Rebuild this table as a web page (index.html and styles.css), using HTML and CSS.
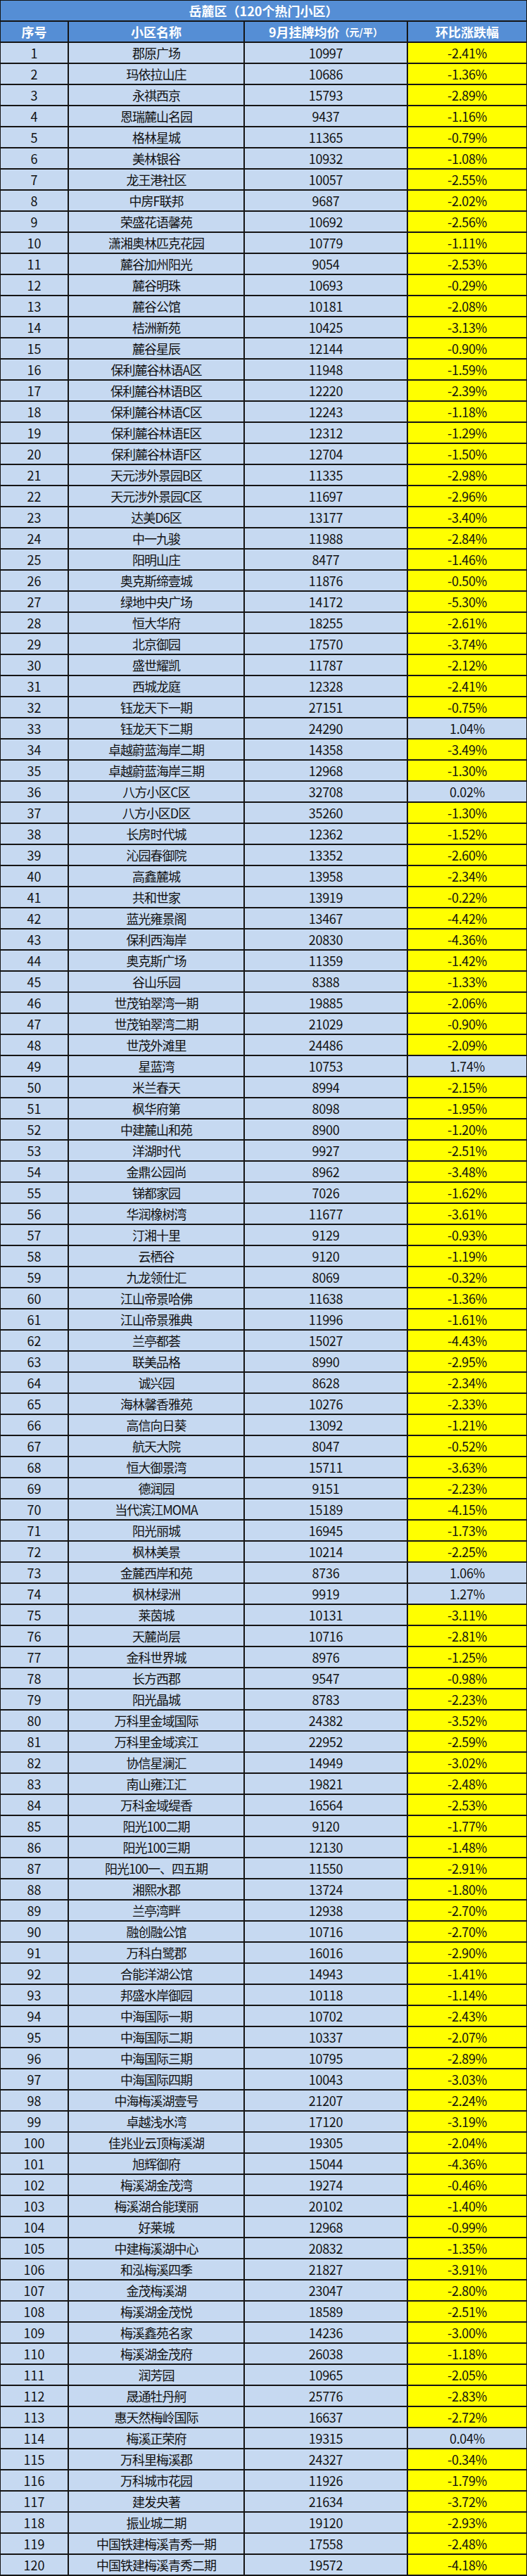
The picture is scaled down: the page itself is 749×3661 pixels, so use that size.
FILE: index.html
```html
<!DOCTYPE html>
<html lang="zh-CN">
<head>
<meta charset="utf-8">
<title>岳麓区（120个热门小区）</title>
<link rel="stylesheet" href="styles.css">
</head>
<body>
<div class="sheet">
  <div class="title">岳麓区（120个热门小区）</div>
  <div class="row head"><span>序号</span><span>小区名称</span><span>9月挂牌均价<small>（元/平）</small></span><span>环比涨跌幅</span></div>
  <div class="row"><span>1</span><span>郡原广场</span><span>10997</span><span class="dn">-2.41%</span></div>
  <div class="row"><span>2</span><span>玛依拉山庄</span><span>10686</span><span class="dn">-1.36%</span></div>
  <div class="row"><span>3</span><span>永祺西京</span><span>15793</span><span class="dn">-2.89%</span></div>
  <div class="row"><span>4</span><span>恩瑞麓山名园</span><span>9437</span><span class="dn">-1.16%</span></div>
  <div class="row"><span>5</span><span>格林星城</span><span>11365</span><span class="dn">-0.79%</span></div>
  <div class="row"><span>6</span><span>美林银谷</span><span>10932</span><span class="dn">-1.08%</span></div>
  <div class="row"><span>7</span><span>龙王港社区</span><span>10057</span><span class="dn">-2.55%</span></div>
  <div class="row"><span>8</span><span>中房F联邦</span><span>9687</span><span class="dn">-2.02%</span></div>
  <div class="row"><span>9</span><span>荣盛花语馨苑</span><span>10692</span><span class="dn">-2.56%</span></div>
  <div class="row"><span>10</span><span>潇湘奥林匹克花园</span><span>10779</span><span class="dn">-1.11%</span></div>
  <div class="row"><span>11</span><span>麓谷加州阳光</span><span>9054</span><span class="dn">-2.53%</span></div>
  <div class="row"><span>12</span><span>麓谷明珠</span><span>10693</span><span class="dn">-0.29%</span></div>
  <div class="row"><span>13</span><span>麓谷公馆</span><span>10181</span><span class="dn">-2.08%</span></div>
  <div class="row"><span>14</span><span>桔洲新苑</span><span>10425</span><span class="dn">-3.13%</span></div>
  <div class="row"><span>15</span><span>麓谷星辰</span><span>12144</span><span class="dn">-0.90%</span></div>
  <div class="row"><span>16</span><span>保利麓谷林语A区</span><span>11948</span><span class="dn">-1.59%</span></div>
  <div class="row"><span>17</span><span>保利麓谷林语B区</span><span>12220</span><span class="dn">-2.39%</span></div>
  <div class="row"><span>18</span><span>保利麓谷林语C区</span><span>12243</span><span class="dn">-1.18%</span></div>
  <div class="row"><span>19</span><span>保利麓谷林语E区</span><span>12312</span><span class="dn">-1.29%</span></div>
  <div class="row"><span>20</span><span>保利麓谷林语F区</span><span>12704</span><span class="dn">-1.50%</span></div>
  <div class="row"><span>21</span><span>天元涉外景园B区</span><span>11335</span><span class="dn">-2.98%</span></div>
  <div class="row"><span>22</span><span>天元涉外景园C区</span><span>11697</span><span class="dn">-2.96%</span></div>
  <div class="row"><span>23</span><span>达美D6区</span><span>13177</span><span class="dn">-3.40%</span></div>
  <div class="row"><span>24</span><span>中一九骏</span><span>11988</span><span class="dn">-2.84%</span></div>
  <div class="row"><span>25</span><span>阳明山庄</span><span>8477</span><span class="dn">-1.46%</span></div>
  <div class="row"><span>26</span><span>奥克斯缔壹城</span><span>11876</span><span class="dn">-0.50%</span></div>
  <div class="row"><span>27</span><span>绿地中央广场</span><span>14172</span><span class="dn">-5.30%</span></div>
  <div class="row"><span>28</span><span>恒大华府</span><span>18255</span><span class="dn">-2.61%</span></div>
  <div class="row"><span>29</span><span>北京御园</span><span>17570</span><span class="dn">-3.74%</span></div>
  <div class="row"><span>30</span><span>盛世耀凯</span><span>11787</span><span class="dn">-2.12%</span></div>
  <div class="row"><span>31</span><span>西城龙庭</span><span>12328</span><span class="dn">-2.41%</span></div>
  <div class="row"><span>32</span><span>钰龙天下一期</span><span>27151</span><span class="dn">-0.75%</span></div>
  <div class="row"><span>33</span><span>钰龙天下二期</span><span>24290</span><span>1.04%</span></div>
  <div class="row"><span>34</span><span>卓越蔚蓝海岸二期</span><span>14358</span><span class="dn">-3.49%</span></div>
  <div class="row"><span>35</span><span>卓越蔚蓝海岸三期</span><span>12968</span><span class="dn">-1.30%</span></div>
  <div class="row"><span>36</span><span>八方小区C区</span><span>32708</span><span>0.02%</span></div>
  <div class="row"><span>37</span><span>八方小区D区</span><span>35260</span><span class="dn">-1.30%</span></div>
  <div class="row"><span>38</span><span>长房时代城</span><span>12362</span><span class="dn">-1.52%</span></div>
  <div class="row"><span>39</span><span>沁园春御院</span><span>13352</span><span class="dn">-2.60%</span></div>
  <div class="row"><span>40</span><span>高鑫麓城</span><span>13958</span><span class="dn">-2.34%</span></div>
  <div class="row"><span>41</span><span>共和世家</span><span>13919</span><span class="dn">-0.22%</span></div>
  <div class="row"><span>42</span><span>蓝光雍景阁</span><span>13467</span><span class="dn">-4.42%</span></div>
  <div class="row"><span>43</span><span>保利西海岸</span><span>20830</span><span class="dn">-4.36%</span></div>
  <div class="row"><span>44</span><span>奥克斯广场</span><span>11359</span><span class="dn">-1.42%</span></div>
  <div class="row"><span>45</span><span>谷山乐园</span><span>8388</span><span class="dn">-1.33%</span></div>
  <div class="row"><span>46</span><span>世茂铂翠湾一期</span><span>19885</span><span class="dn">-2.06%</span></div>
  <div class="row"><span>47</span><span>世茂铂翠湾二期</span><span>21029</span><span class="dn">-0.90%</span></div>
  <div class="row"><span>48</span><span>世茂外滩里</span><span>24486</span><span class="dn">-2.09%</span></div>
  <div class="row"><span>49</span><span>星蓝湾</span><span>10753</span><span>1.74%</span></div>
  <div class="row"><span>50</span><span>米兰春天</span><span>8994</span><span class="dn">-2.15%</span></div>
  <div class="row"><span>51</span><span>枫华府第</span><span>8098</span><span class="dn">-1.95%</span></div>
  <div class="row"><span>52</span><span>中建麓山和苑</span><span>8900</span><span class="dn">-1.20%</span></div>
  <div class="row"><span>53</span><span>洋湖时代</span><span>9927</span><span class="dn">-2.51%</span></div>
  <div class="row"><span>54</span><span>金鼎公园尚</span><span>8962</span><span class="dn">-3.48%</span></div>
  <div class="row"><span>55</span><span>锑都家园</span><span>7026</span><span class="dn">-1.62%</span></div>
  <div class="row"><span>56</span><span>华润橡树湾</span><span>11677</span><span class="dn">-3.61%</span></div>
  <div class="row"><span>57</span><span>汀湘十里</span><span>9129</span><span class="dn">-0.93%</span></div>
  <div class="row"><span>58</span><span>云栖谷</span><span>9120</span><span class="dn">-1.19%</span></div>
  <div class="row"><span>59</span><span>九龙领仕汇</span><span>8069</span><span class="dn">-0.32%</span></div>
  <div class="row"><span>60</span><span>江山帝景哈佛</span><span>11638</span><span class="dn">-1.36%</span></div>
  <div class="row"><span>61</span><span>江山帝景雅典</span><span>11996</span><span class="dn">-1.61%</span></div>
  <div class="row"><span>62</span><span>兰亭都荟</span><span>15027</span><span class="dn">-4.43%</span></div>
  <div class="row"><span>63</span><span>联美品格</span><span>8990</span><span class="dn">-2.95%</span></div>
  <div class="row"><span>64</span><span>诚兴园</span><span>8628</span><span class="dn">-2.34%</span></div>
  <div class="row"><span>65</span><span>海林馨香雅苑</span><span>10276</span><span class="dn">-2.33%</span></div>
  <div class="row"><span>66</span><span>高信向日葵</span><span>13092</span><span class="dn">-1.21%</span></div>
  <div class="row"><span>67</span><span>航天大院</span><span>8047</span><span class="dn">-0.52%</span></div>
  <div class="row"><span>68</span><span>恒大御景湾</span><span>15711</span><span class="dn">-3.63%</span></div>
  <div class="row"><span>69</span><span>德润园</span><span>9151</span><span class="dn">-2.23%</span></div>
  <div class="row"><span>70</span><span>当代滨江MOMA</span><span>15189</span><span class="dn">-4.15%</span></div>
  <div class="row"><span>71</span><span>阳光丽城</span><span>16945</span><span class="dn">-1.73%</span></div>
  <div class="row"><span>72</span><span>枫林美景</span><span>10214</span><span class="dn">-2.25%</span></div>
  <div class="row"><span>73</span><span>金麓西岸和苑</span><span>8736</span><span>1.06%</span></div>
  <div class="row"><span>74</span><span>枫林绿洲</span><span>9919</span><span>1.27%</span></div>
  <div class="row"><span>75</span><span>莱茵城</span><span>10131</span><span class="dn">-3.11%</span></div>
  <div class="row"><span>76</span><span>天麓尚层</span><span>10716</span><span class="dn">-2.81%</span></div>
  <div class="row"><span>77</span><span>金科世界城</span><span>8976</span><span class="dn">-1.25%</span></div>
  <div class="row"><span>78</span><span>长方西郡</span><span>9547</span><span class="dn">-0.98%</span></div>
  <div class="row"><span>79</span><span>阳光晶城</span><span>8783</span><span class="dn">-2.23%</span></div>
  <div class="row"><span>80</span><span>万科里金域国际</span><span>24382</span><span class="dn">-3.52%</span></div>
  <div class="row"><span>81</span><span>万科里金域滨江</span><span>22952</span><span class="dn">-2.59%</span></div>
  <div class="row"><span>82</span><span>协信星澜汇</span><span>14949</span><span class="dn">-3.02%</span></div>
  <div class="row"><span>83</span><span>南山雍江汇</span><span>19821</span><span class="dn">-2.48%</span></div>
  <div class="row"><span>84</span><span>万科金域缇香</span><span>16564</span><span class="dn">-2.53%</span></div>
  <div class="row"><span>85</span><span>阳光100二期</span><span>9120</span><span class="dn">-1.77%</span></div>
  <div class="row"><span>86</span><span>阳光100三期</span><span>12130</span><span class="dn">-1.48%</span></div>
  <div class="row"><span>87</span><span>阳光100一、四五期</span><span>11550</span><span class="dn">-2.91%</span></div>
  <div class="row"><span>88</span><span>湘熙水郡</span><span>13724</span><span class="dn">-1.80%</span></div>
  <div class="row"><span>89</span><span>兰亭湾畔</span><span>12938</span><span class="dn">-2.70%</span></div>
  <div class="row"><span>90</span><span>融创融公馆</span><span>10716</span><span class="dn">-2.70%</span></div>
  <div class="row"><span>91</span><span>万科白鹭郡</span><span>16016</span><span class="dn">-2.90%</span></div>
  <div class="row"><span>92</span><span>合能洋湖公馆</span><span>14943</span><span class="dn">-1.41%</span></div>
  <div class="row"><span>93</span><span>邦盛水岸御园</span><span>10118</span><span class="dn">-1.14%</span></div>
  <div class="row"><span>94</span><span>中海国际一期</span><span>10702</span><span class="dn">-2.43%</span></div>
  <div class="row"><span>95</span><span>中海国际二期</span><span>10337</span><span class="dn">-2.07%</span></div>
  <div class="row"><span>96</span><span>中海国际三期</span><span>10795</span><span class="dn">-2.89%</span></div>
  <div class="row"><span>97</span><span>中海国际四期</span><span>10043</span><span class="dn">-3.03%</span></div>
  <div class="row"><span>98</span><span>中海梅溪湖壹号</span><span>21207</span><span class="dn">-2.24%</span></div>
  <div class="row"><span>99</span><span>卓越浅水湾</span><span>17120</span><span class="dn">-3.19%</span></div>
  <div class="row"><span>100</span><span>佳兆业云顶梅溪湖</span><span>19305</span><span class="dn">-2.04%</span></div>
  <div class="row"><span>101</span><span>旭辉御府</span><span>15044</span><span class="dn">-4.36%</span></div>
  <div class="row"><span>102</span><span>梅溪湖金茂湾</span><span>19274</span><span class="dn">-0.46%</span></div>
  <div class="row"><span>103</span><span>梅溪湖合能璞丽</span><span>20102</span><span class="dn">-1.40%</span></div>
  <div class="row"><span>104</span><span>好莱城</span><span>12968</span><span class="dn">-0.99%</span></div>
  <div class="row"><span>105</span><span>中建梅溪湖中心</span><span>20832</span><span class="dn">-1.35%</span></div>
  <div class="row"><span>106</span><span>和泓梅溪四季</span><span>21827</span><span class="dn">-3.91%</span></div>
  <div class="row"><span>107</span><span>金茂梅溪湖</span><span>23047</span><span class="dn">-2.80%</span></div>
  <div class="row"><span>108</span><span>梅溪湖金茂悦</span><span>18589</span><span class="dn">-2.51%</span></div>
  <div class="row"><span>109</span><span>梅溪鑫苑名家</span><span>14236</span><span class="dn">-3.00%</span></div>
  <div class="row"><span>110</span><span>梅溪湖金茂府</span><span>26038</span><span class="dn">-1.18%</span></div>
  <div class="row"><span>111</span><span>润芳园</span><span>10965</span><span class="dn">-2.05%</span></div>
  <div class="row"><span>112</span><span>晟通牡丹舸</span><span>25776</span><span class="dn">-2.83%</span></div>
  <div class="row"><span>113</span><span>惠天然梅岭国际</span><span>16637</span><span class="dn">-2.72%</span></div>
  <div class="row"><span>114</span><span>梅溪正荣府</span><span>19315</span><span>0.04%</span></div>
  <div class="row"><span>115</span><span>万科里梅溪郡</span><span>24327</span><span class="dn">-0.34%</span></div>
  <div class="row"><span>116</span><span>万科城市花园</span><span>11926</span><span class="dn">-1.79%</span></div>
  <div class="row"><span>117</span><span>建发央著</span><span>21634</span><span class="dn">-3.72%</span></div>
  <div class="row"><span>118</span><span>振业城二期</span><span>19120</span><span class="dn">-2.93%</span></div>
  <div class="row"><span>119</span><span>中国铁建梅溪青秀一期</span><span>17558</span><span class="dn">-2.48%</span></div>
  <div class="row"><span>120</span><span>中国铁建梅溪青秀二期</span><span>19572</span><span class="dn">-4.18%</span></div>
</div>
</body>
</html>
```

FILE: styles.css
```css
html, body {
  margin: 0;
  padding: 0;
  background: #ffffff;
}

.sheet {
  width: 749px;
  display: grid;
  row-gap: 2px;
  padding: 1px 0 2px;
  background: #151515;
  font-family: "Noto Sans CJK SC", "Noto Sans", sans-serif;
  color: #111111;
}

.title {
  height: 28px;
  margin: 0 1px;
  background: #558ed5;
  color: #ffffff;
  font-size: 18px;
  font-weight: 700;
  display: flex;
  align-items: center;
  justify-content: center;
  line-height: 1;
}

.row {
  display: grid;
  grid-template-columns: 95px 248px 230px 168px;
  column-gap: 2px;
  padding: 0 1px;
  height: 28px;
}

.row > span {
  display: flex;
  align-items: center;
  justify-content: center;
  background: #c6d9f1;
  font-size: 18px;
  line-height: 1;
  white-space: nowrap;
}

.row > span:nth-child(2) {
  letter-spacing: -1px;
}

.row > span:nth-child(3),
.row > span:nth-child(4) {
  letter-spacing: -0.3px;
}

.row > span.dn {
  background: #ffff00;
}

.row.head > span {
  background: #558ed5;
  color: #ffffff;
  font-weight: 700;
  letter-spacing: 0;
}

.row.head small {
  font-size: 14px;
  font-weight: 700;
}
```
